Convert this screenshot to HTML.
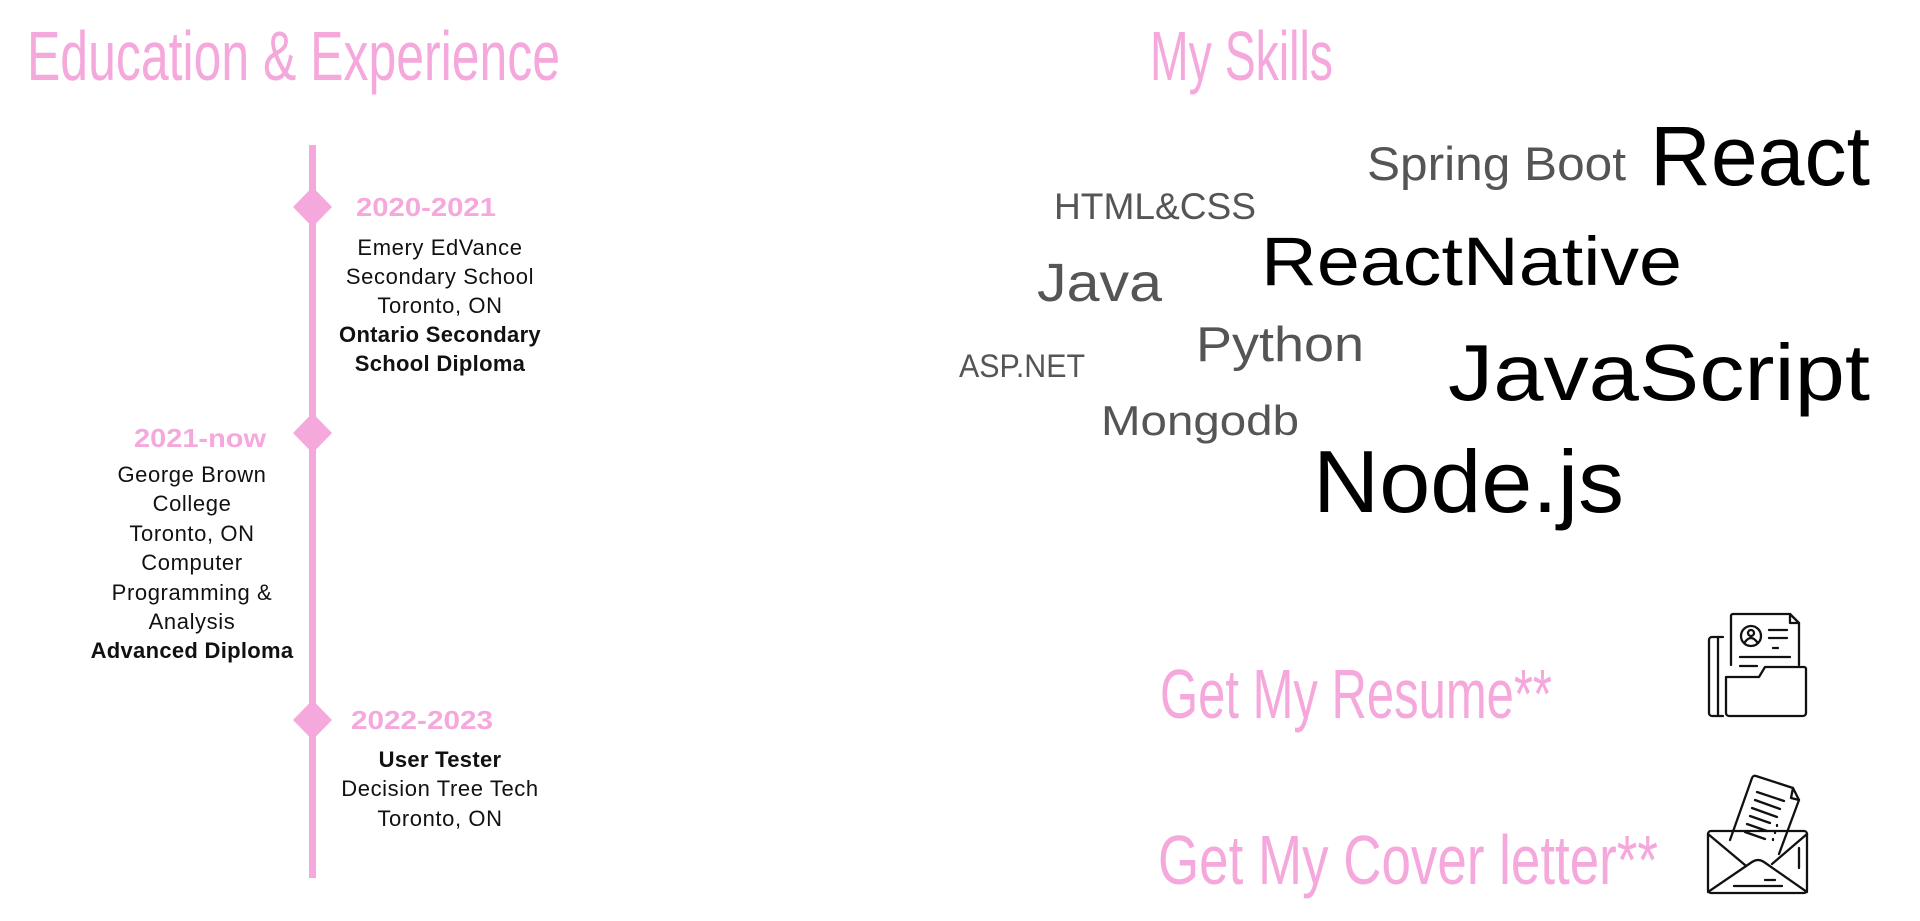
<!DOCTYPE html>
<html><head><meta charset="utf-8"><style>
html,body{margin:0;padding:0;background:#fff;width:1920px;height:921px;overflow:hidden}
svg{display:block}
.h{font-family:"Liberation Sans Narrow","Liberation Sans",sans-serif;fill:#f5a8dc}
.t{font-family:"Liberation Sans",sans-serif;font-size:22px;letter-spacing:0.6px;fill:#111}
.b{font-weight:bold;letter-spacing:0.3px}
.d{font-family:"Liberation Sans",sans-serif;font-weight:bold;font-size:26px;fill:#f5a8dc}
.g{font-family:"Liberation Sans",sans-serif;fill:#555}
.k{font-family:"Liberation Sans",sans-serif;fill:#000}
</style></head><body>
<svg width="1920" height="921" viewBox="0 0 1920 921" xmlns="http://www.w3.org/2000/svg">
<text class="h" x="27" y="80" font-size="70" textLength="533" lengthAdjust="spacingAndGlyphs">Education &amp; Experience</text>
<rect x="309" y="145" width="7" height="733" fill="#f5a8dc"/>
<polygon points="312.5,187 332,207 312.5,227 293,207" fill="#f5a8dc"/>
<polygon points="312.5,413 332,433 312.5,453 293,433" fill="#f5a8dc"/>
<polygon points="312.5,700 332,720 312.5,740 293,720" fill="#f5a8dc"/>
<text class="d" x="356" y="216" textLength="140" lengthAdjust="spacingAndGlyphs">2020-2021</text>
<g text-anchor="middle">
<text class="t" x="440" y="255">Emery EdVance</text>
<text class="t" x="440" y="284">Secondary School</text>
<text class="t" x="440" y="313">Toronto, ON</text>
<text class="t b" x="440" y="342">Ontario Secondary</text>
<text class="t b" x="440" y="371">School Diploma</text>
<text class="t" x="192" y="482">George Brown</text>
<text class="t" x="192" y="511">College</text>
<text class="t" x="192" y="541">Toronto, ON</text>
<text class="t" x="192" y="570">Computer</text>
<text class="t" x="192" y="600">Programming &amp;</text>
<text class="t" x="192" y="629">Analysis</text>
<text class="t b" x="192" y="658">Advanced Diploma</text>
<text class="t b" x="440" y="767">User Tester</text>
<text class="t" x="440" y="796">Decision Tree Tech</text>
<text class="t" x="440" y="826">Toronto, ON</text>
</g>
<text class="d" x="134" y="447" textLength="132" lengthAdjust="spacingAndGlyphs">2021-now</text>
<text class="d" x="351" y="729" textLength="142" lengthAdjust="spacingAndGlyphs">2022-2023</text>

<g transform="translate(-7,0)">
<text class="h" x="1157" y="80" font-size="70" textLength="183" lengthAdjust="spacingAndGlyphs">My Skills</text>
<text class="g" x="1374" y="180" font-size="47" textLength="259" lengthAdjust="spacingAndGlyphs">Spring Boot</text>
<text class="k" x="1657" y="185" font-size="84" textLength="220" lengthAdjust="spacingAndGlyphs">React</text>
<text class="g" x="1061" y="219" font-size="37" textLength="202" lengthAdjust="spacingAndGlyphs">HTML&amp;CSS</text>
<text class="k" x="1268" y="285" font-size="69" textLength="421" lengthAdjust="spacingAndGlyphs">ReactNative</text>
<text class="g" x="1044" y="301" font-size="54" textLength="125" lengthAdjust="spacingAndGlyphs">Java</text>
<text class="g" x="1203" y="361" font-size="49" textLength="168" lengthAdjust="spacingAndGlyphs">Python</text>
<text class="g" x="966" y="377" font-size="32" textLength="126" lengthAdjust="spacingAndGlyphs">ASP.NET</text>
<text class="k" x="1455" y="400" font-size="80" textLength="422" lengthAdjust="spacingAndGlyphs">JavaScript</text>
<text class="g" x="1108" y="435" font-size="42" textLength="198" lengthAdjust="spacingAndGlyphs">Mongodb</text>
<text class="k" x="1320" y="512" font-size="88" textLength="311" lengthAdjust="spacingAndGlyphs">Node.js</text>
<text class="h" x="1167" y="718" font-size="70" textLength="392" lengthAdjust="spacingAndGlyphs">Get My Resume**</text>
<text class="h" x="1165" y="884" font-size="70" textLength="500" lengthAdjust="spacingAndGlyphs">Get My Cover letter**</text>
</g>

<g fill="none" stroke="#111" stroke-width="2.3" stroke-linejoin="round" stroke-linecap="round">
<path d="M1723 637 h-11 a3 3 0 0 0 -3 3 v73 a3 3 0 0 0 3 3 h11"/>
<path d="M1718 637 v79"/>
<path d="M1731 665 v-49 a2 2 0 0 1 2 -2 h57 l9 9 v42"/>
<path d="M1790 614 v9 h9"/>
<circle cx="1751" cy="636" r="10"/>
<circle cx="1751" cy="633" r="3"/>
<path d="M1745 642 q6 -8 12 0"/>
<path d="M1769 630 h18 M1769 638 h18 M1773 648 h5 M1740 657 h50 M1740 666 h17"/>
<path d="M1726 677 h33 l6 -10 h39 a2 2 0 0 1 2 2 v44 a3 3 0 0 1 -3 3 h-74 a3 3 0 0 1 -3 -3 z"/>
<path d="M1711 831 h93 a3 3 0 0 1 3 3 v56 a3 3 0 0 1 -3 3 h-93 a3 3 0 0 1 -3 -3 v-56 a3 3 0 0 1 3 -3 z"/>
<path d="M1708 834 l37 31 M1807 834 l-35 30"/>
<path d="M1708 892 l44 -30 q6 -4 12 0 l43 30"/>
<path d="M1730 840 l22 -62 a3 3 0 0 1 4 -2 l37 12 l6 12 l-20 54"/>
<path d="M1793 788 l-2 10 l8 2"/>
<path d="M1757 792 l27 9 M1755 800 l25 9 M1752 808 l25 9 M1750 816 l20 7 M1747 824 l20 7 M1745 832 l20 7 M1777 825 v1 M1775 832 v1 M1773 839 v1 M1765 880 h10 M1734 886 h48 M1799 848 v20"/>
</g>
</svg>
</body></html>
